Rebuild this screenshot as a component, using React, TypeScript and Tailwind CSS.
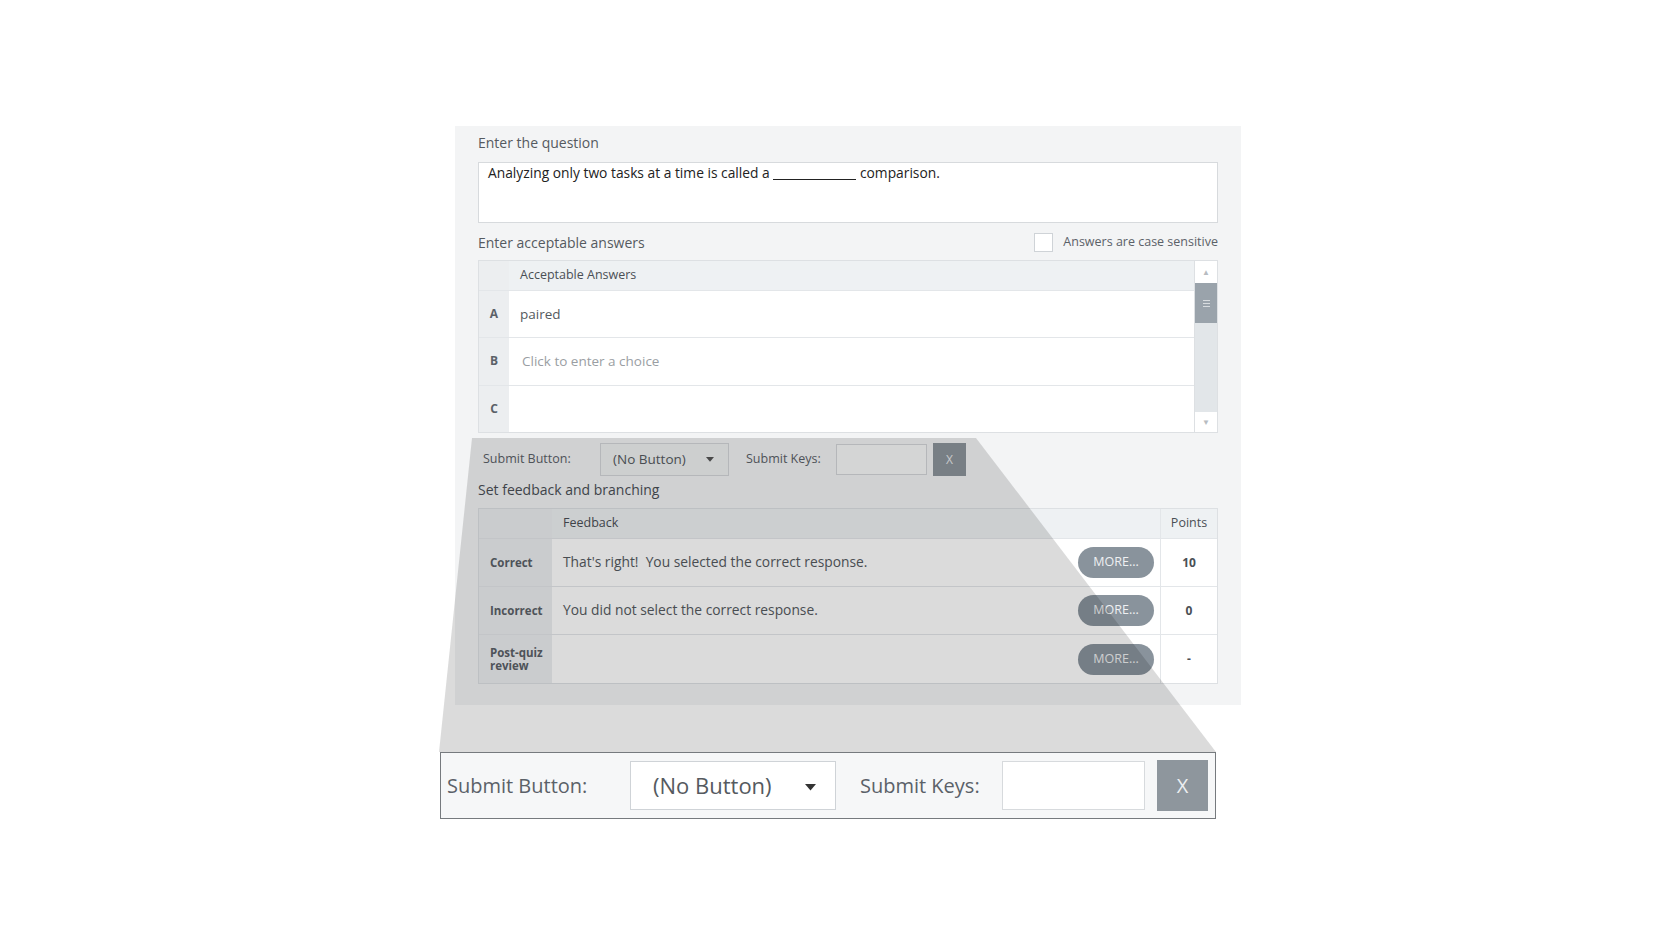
import React from 'react'

const font = { fontFamily: '"Open Sans", "Noto Sans", sans-serif' }

function Caret({ size = 8, color = '#555' }: { size?: number; color?: string }) {
  return (
    <svg width={size} height={size * 0.6} viewBox="0 0 10 6">
      <path d="M0 0 L10 0 L5 6 Z" fill={color} />
    </svg>
  )
}

const answers = [
  { key: 'A', text: 'paired', placeholder: false },
  { key: 'B', text: 'Click to enter a choice', placeholder: true },
  { key: 'C', text: '', placeholder: false },
]

const feedback = [
  { label: 'Correct', text: "That's right!  You selected the correct response.", points: '10' },
  { label: 'Incorrect', text: 'You did not select the correct response.', points: '0' },
  { label: 'Post-quiz review', text: '', points: '-' },
]

function AnswersTable() {
  return (
    <div className="mt-[8px] flex h-[173px] border border-[#dde0e3] bg-white">
      <div className="flex flex-1 flex-col">
        <div className="flex h-[30px] border-b border-[#e3e6e9] bg-[#eef1f3]">
          <div className="w-[30px] bg-[#eceef0]" />
          <div className="flex items-center pl-[11px] text-[12.5px] text-[#4a4f55]">Acceptable Answers</div>
        </div>
        {answers.map((a, i) => (
          <div
            key={a.key}
            className={`flex flex-1 ${i < answers.length - 1 ? 'border-b border-[#e3e6e9]' : ''}`}
          >
            <div className="flex w-[30px] items-center justify-center bg-[#eceef0] text-[12px] font-bold text-[#5b6168]">
              {a.key}
            </div>
            <div
              className={`flex items-center pl-[11px] text-[13.5px] ${
                a.placeholder ? 'pl-[13px] text-[#9a9ea3]' : 'text-[#555a60]'
              }`}
            >
              {a.text}
            </div>
          </div>
        ))}
      </div>
      {/* scrollbar */}
      <div className="flex w-[23px] flex-col border-l border-[#dde0e3] bg-[#e2e6e9]">
        <div className="flex h-[22px] items-center justify-center bg-white text-[8px] text-[#b7bcc1]">▲</div>
        <div className="flex h-[40px] flex-col items-center justify-center gap-[2px] bg-[#9aa3ab]">
          <div className="h-px w-[7px] bg-[#d8dcdf]" />
          <div className="h-px w-[7px] bg-[#d8dcdf]" />
          <div className="h-px w-[7px] bg-[#d8dcdf]" />
        </div>
        <div className="flex-1" />
        <div className="flex h-[20px] items-center justify-center bg-white text-[8px] text-[#b7bcc1]">▼</div>
      </div>
    </div>
  )
}

function SubmitRow() {
  return (
    <div className="mt-[10px] flex h-[33px] items-center">
      <span className="ml-[5px] w-[117px] text-[12.5px] text-[#5b6168]">Submit Button:</span>
      <div className="flex h-[33px] w-[129px] items-center justify-between border border-[#d3d6d9] bg-[#eff1f2] pl-[12px] pr-[14px]">
        <span className="text-[13.5px] text-[#555a60]">(No Button)</span>
        <Caret size={8} color="#555" />
      </div>
      <span className="ml-[17px] w-[90px] text-[12.5px] text-[#5b6168]">Submit Keys:</span>
      <div className="h-[31px] w-[91px] border border-[#d3d6d9] bg-[#f7f8f9]" />
      <div className="ml-[6px] flex h-[33px] w-[33px] items-center justify-center bg-[#8c949b] text-[12px] text-[#e8eaec]">
        X
      </div>
    </div>
  )
}

function FeedbackTable() {
  return (
    <div className="mt-[8px] flex flex-col border border-[#dde0e3] bg-white">
      <div className="flex h-[30px] border-b border-[#e3e6e9] bg-[#eef1f3]">
        <div className="w-[73px] bg-[#eceef0]" />
        <div className="flex flex-1 items-center pl-[11px] text-[12.5px] text-[#4a4f55]">Feedback</div>
        <div className="flex w-[57px] items-center justify-center border-l border-[#e3e6e9] text-[12.5px] text-[#4a4f55]">
          Points
        </div>
      </div>
      {feedback.map((f, i) => (
        <div
          key={f.label}
          className={`flex h-[48px] ${i < feedback.length - 1 ? 'border-b border-[#e3e6e9]' : 'h-[47px]'}`}
        >
          <div className="flex w-[73px] items-center bg-[#eceef0] pl-[11px] text-[11.5px] leading-[13px] font-bold text-[#5b6168]">
            {f.label === 'Post-quiz review' ? (
              <span>
                Post-quiz
                <br />
                review
              </span>
            ) : (
              f.label
            )}
          </div>
          <div className="flex flex-1 items-center justify-between pl-[11px] pr-[6px]">
            <span className="whitespace-pre text-[13.8px] text-[#555a60]">{f.text}</span>
            <div className="flex h-[31px] w-[76px] items-center justify-center rounded-full bg-[#89939c] text-[12.5px] text-[#eef0f2]">
              MORE...
            </div>
          </div>
          <div className="flex w-[57px] items-center justify-center border-l border-[#e3e6e9] text-[12px] font-bold text-[#4a4f55]">
            {f.points}
          </div>
        </div>
      ))}
    </div>
  )
}

export default function App() {
  return (
    <div className="relative h-[946px] w-[1680px] overflow-hidden bg-white" style={font}>
      <div className="pl-[455px] pt-[126px]">
        {/* editor panel */}
        <div className="flex h-[579px] w-[786px] flex-col bg-[#f3f4f5] px-[23px] pt-[7px]">
          <div className="h-[20px] text-[14px] leading-[20px] text-[#555a60]">Enter the question</div>
          <div className="mt-[9px] h-[61px] border border-[#d7dadd] bg-white pl-[9px] pt-[1px] text-[13.8px] leading-[18px] text-[#222]">
            Analyzing only two tasks at a time is called a{' '}
            <span className="inline-block w-[83px] border-b border-[#222] align-[-2px]" /> comparison.
          </div>
          <div className="mt-[9px] flex h-[20px] items-center justify-between">
            <span className="text-[14px] text-[#555a60]">Enter acceptable answers</span>
            <div className="flex items-center">
              <div className="h-[19px] w-[19px] border border-[#cfd3d7] bg-white" />
              <span className="ml-[10px] text-[12.5px] text-[#5b6168]">Answers are case sensitive</span>
            </div>
          </div>
          <AnswersTable />
          <SubmitRow />
          <div className="mt-[4px] h-[20px] text-[14px] leading-[20px] text-[#4a4f55]">Set feedback and branching</div>
          <FeedbackTable />
        </div>

        {/* magnified submit row */}
        <div className="ml-[-15px] mt-[47px] flex h-[67px] w-[776px] items-center border border-[#767a7e] bg-[#f6f7f8] pl-[6px]">
          <span className="w-[183px] text-[20px] text-[#5b6168]">Submit Button:</span>
          <div className="flex h-[49px] w-[206px] items-center justify-between border border-[#cfd3d7] bg-white pl-[22px] pr-[19px]">
            <span className="text-[22px] text-[#555a60]">(No Button)</span>
            <div className="mt-[4px]">
              <Caret size={11} color="#333" />
            </div>
          </div>
          <span className="ml-[24px] w-[142px] text-[20px] text-[#5b6168]">Submit Keys:</span>
          <div className="h-[49px] w-[143px] border border-[#d7dadd] bg-white" />
          <div className="ml-[12px] flex h-[51px] w-[51px] items-center justify-center bg-[#8e969d] text-[20px] text-[#eceef0]">
            X
          </div>
        </div>
      </div>

      {/* magnifier projection */}
      <svg className="pointer-events-none absolute left-0 top-0" width="1680" height="946">
        <polygon points="472,438 976,438 1216,752 439,752" fill="rgb(0,0,0)" fillOpacity="0.14" />
      </svg>
    </div>
  )
}
